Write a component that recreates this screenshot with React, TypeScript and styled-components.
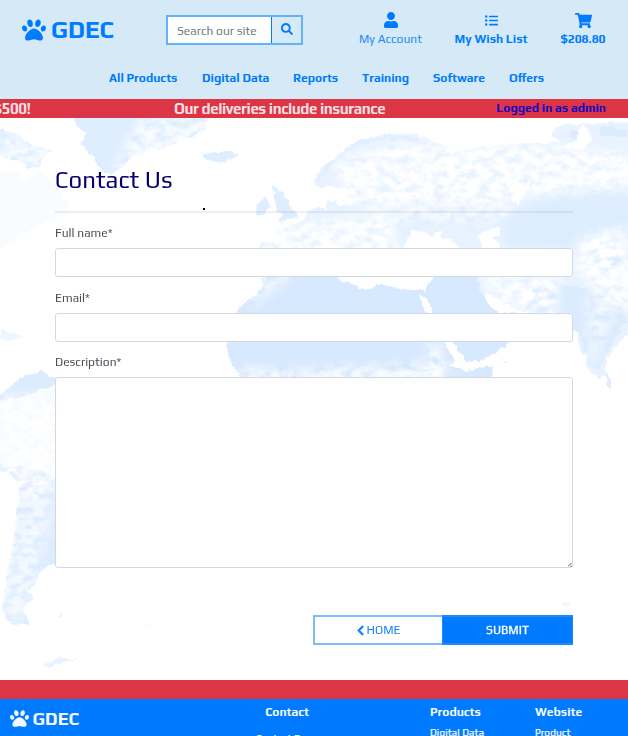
import React from 'react';
import styled, { createGlobalStyle } from 'styled-components';
import { FaPaw, FaUser, FaListUl, FaShoppingCart, FaSearch, FaChevronLeft } from 'react-icons/fa';

const GlobalStyle = createGlobalStyle`
  *, *::before, *::after { box-sizing: border-box; }
  body { margin: 0; background: #fff; overflow: hidden; }
  svg { display: block; flex: none; }
`;

const Page = styled.div`
  width: 628px;
  height: 736px;
  overflow: hidden;
  display: flex;
  flex-direction: column;
  font-family: Play, Roboto, sans-serif;
  font-size: 12px;
  color: #495057;
`;

const Header = styled.header`
  height: 99px;
  flex: none;
  background: #d5eaf6;
  color: #007bff;
`;

const TopBar = styled.div`
  height: 60px;
  display: flex;
  align-items: flex-start;
`;

const Brand = styled.a`
  flex: none;
  display: flex;
  align-items: center;
  gap: 5px;
  width: 166px;
  height: 59px;
  padding-left: 22px;
  font-size: 24px;
  font-weight: 700;
`;

const SearchBox = styled.form`
  flex: none;
  display: flex;
  width: 137px;
  height: 30px;
  margin-top: 15px;
  border: 2px solid #67b0fb;
`;

const SearchInput = styled.input`
  width: 103px;
  border: 0;
  padding: 2px 0 0 9px;
  background: #fff;
  font: inherit;
  border-radius: 0;
  outline: none;
  &::placeholder { color: #747b82; opacity: 1; }
`;

const SearchButton = styled.button`
  flex: 1;
  display: flex;
  justify-content: center;
  align-items: center;
  padding: 0 0 2px 0;
  border: 0;
  border-left: 1px solid #007bff;
  background: transparent;
  color: #007bff;
`;

const Account = styled.nav`
  flex: none;
  display: flex;
  gap: 32px;
  margin-left: 56px;
`;

const AccountLink = styled.a<{ $width: number; $bold?: boolean }>`
  display: flex;
  flex-direction: column;
  align-items: center;
  width: ${(p) => p.$width}px;
  padding-top: 12px;
  line-height: 15px;
  white-space: nowrap;
  font-weight: ${(p) => (p.$bold ? 700 : 400)};
  color: ${(p) => (p.$bold ? '#007bff' : '#2a89f6')};
  svg { color: #007bff; }
`;

const IconSlot = styled.span`
  height: 20px;
  display: flex;
  align-items: flex-start;
`;

const SmallIconSlot = styled(IconSlot)`
  padding-top: 2px;
`;

const Menu = styled.nav`
  display: flex;
  gap: 24px;
  padding: 11px 0 0 109px;
`;

const MenuItem = styled.a<{ $width: number }>`
  width: ${(p) => p.$width}px;
  white-space: nowrap;
  font-weight: 700;
  line-height: 15px;
`;

const Promo = styled.div`
  height: 19px;
  flex: none;
  display: flex;
  align-items: center;
  overflow: hidden;
  white-space: nowrap;
  background: #dc3545;
  color: #fbdfe2;
  font-size: 15px;
  font-weight: 700;
  letter-spacing: -0.42px;
`;

const PromoEnd = styled.span`
  width: 181px;
  margin-left: -7px;
`;

const PromoText = styled.span`
  flex: none;
`;

const LoginState = styled.span`
  margin: 0 22px 0 auto;
  padding-bottom: 2px;
  font-size: 12px;
  letter-spacing: 0;
  color: #1508c4;
`;

const Main = styled.main`
  position: relative;
  z-index: 0;
  height: 562px;
  flex: none;
  padding: 47px 55px 0;
`;

const MapLayer = styled.svg`
  position: absolute;
  inset: 0;
  z-index: -1;
`;

const Title = styled.h1`
  margin: 0;
  height: 46px;
  font-size: 24px;
  line-height: 29px;
  font-weight: 400;
  color: #08006e;
`;

const Rule = styled.div`
  position: relative;
  height: 2px;
  background: rgba(0, 0, 0, 0.06);
`;

const Speck = styled.span`
  position: absolute;
  left: 148px;
  top: -3px;
  width: 1.5px;
  height: 2px;
  background: #000;
`;

const Field = styled.label<{ $gap: number }>`
  display: block;
  padding-top: ${(p) => p.$gap}px;
  line-height: 15px;
`;

const TextInput = styled.input`
  display: block;
  width: 518px;
  height: 29px;
  margin-top: 7px;
  border: 1px solid #d3d9df;
  border-radius: 3px;
  background: #fff;
`;

const AreaWrap = styled.div`
  position: relative;
  width: 518px;
`;

const TextArea = styled.textarea`
  display: block;
  width: 518px;
  height: 191px;
  margin-top: 7px;
  border: 1px solid #d3d9df;
  border-radius: 3px;
  background: #fff;
  resize: none;
`;

const Grip = styled.svg`
  position: absolute;
  right: 1px;
  bottom: 1px;
`;

const Actions = styled.div`
  display: flex;
  justify-content: flex-end;
  margin-top: 47px;
`;

const ActionButton = styled.button<{ $primary?: boolean }>`
  display: flex;
  align-items: center;
  justify-content: center;
  gap: 1px;
  width: ${(p) => (p.$primary ? 131 : 129)}px;
  height: 30px;
  padding: 0 ${(p) => (p.$primary ? 0 : 2)}px 0 0;
  border: 2px solid ${(p) => (p.$primary ? '#1f8afd' : '#7fbbfb')};
  border-right-width: ${(p) => (p.$primary ? 1 : 0)}px;
  border-left-width: ${(p) => (p.$primary ? 1 : 2)}px;
  background: ${(p) => (p.$primary ? '#007bff' : '#fff')};
  color: ${(p) => (p.$primary ? '#fff' : '#1683fb')};
  font: inherit;
  -webkit-text-stroke: ${(p) => (p.$primary ? '0.3px #fff' : '0')};
`;

const RedBand = styled.div`
  height: 19px;
  flex: none;
  background: #dc3545;
`;

const Footer = styled.footer`
  height: 37px;
  flex: none;
  display: grid;
  grid-template-columns: 244px 186px 105px 93px;
  overflow: hidden;
  background: #007bff;
  color: #f4f9ff;
`;

const FooterBrand = styled.div`
  display: flex;
  align-items: center;
  gap: 4px;
  height: 39px;
  padding-left: 9.5px;
  font-size: 17.8px;
  font-weight: 700;
`;

const FooterColumn = styled.div<{ $center?: boolean }>`
  width: ${(p) => (p.$center ? '86px' : 'auto')};
  padding-top: 6px;
  text-align: ${(p) => (p.$center ? 'center' : 'left')};
  white-space: nowrap;
`;

const FooterTitle = styled.div`
  font-weight: 700;
  line-height: 15px;
`;

const FooterLink = styled.div<{ $gap: number }>`
  margin-top: ${(p) => p.$gap}px;
  font-size: 10px;
  line-height: 12px;
  letter-spacing: 0.08px;
  -webkit-text-stroke: 0.25px #f4f9ff;
`;

const menu: [string, number][] = [
  ['All Products', 69],
  ['Digital Data', 67],
  ['Reports', 45],
  ['Training', 47],
  ['Software', 52],
  ['Offers', 36],
];

function WorldMap() {
  return (
    <MapLayer width="628" height="562" viewBox="0 118 628 562" aria-hidden="true">
      <defs>
        <filter id="coast" x="0" y="118" width="628" height="562" filterUnits="userSpaceOnUse">
          <feTurbulence type="fractalNoise" baseFrequency="0.13" numOctaves="3" seed="4" result="n" />
          <feDisplacementMap in="SourceGraphic" in2="n" scale="7" xChannelSelector="R" yChannelSelector="G" result="d" />
          <feGaussianBlur in="d" stdDeviation="0.5" />
        </filter>
        <filter id="steppe" x="0" y="118" width="628" height="562" filterUnits="userSpaceOnUse">
          <feGaussianBlur in="SourceGraphic" stdDeviation="4" />
        </filter>
        <filter id="relief" x="0" y="118" width="628" height="562" filterUnits="userSpaceOnUse">
          <feGaussianBlur in="SourceGraphic" stdDeviation="6" result="b" />
          <feTurbulence type="fractalNoise" baseFrequency="0.09 0.14" numOctaves="5" seed="9" />
          <feColorMatrix values="0 0 0 0 1  0 0 0 0 1  0 0 0 0 1  2.6 0 0 0 -0.6" result="m" />
          <feComposite in="b" in2="m" operator="in" />
        </filter>
      </defs>
      <g filter="url(#coast)">
        <g fill="#deeeff">
          <path d="M70 112 78 128 88 134 81 142 85 150 94 158 97 165 104 172 112 174 122 168 126 162 138 155 150 150 170 146 190 138 206 130 205 122 218 112Z" />
          <path d="M200 152 210 154 215 151 230 151 239 154 232 160 218 163 208 159Z" />
          <path d="M-5 129 14 133 24 140 30 144 52 150 44 156 38 166 28 168 20 160 10 160-5 152Z" />
          <path d="M274 186 284 192 286 200 292 208 298 217 290 221 278 222 282 214 276 208Z" />
          <path d="M256 206 266 196 270 206 264 216 257 214Z" />
          <path d="M503 361 508 361 508 363 503 363Z" opacity=".7" />
          <path d="M606 372 612 380 612 388 606 386Z" />
          <path d="M0 330 12 332 24 338 8 340 0 338Z" opacity=".5" />
          <path d="M44 665 62 658 78 658 58 664 44 668Z M55 616 64 613 62 616Z" opacity=".7" />
          <path d="M562 603 568 602 569 606 562 606Z M145 623 152 625 148 626Z" opacity=".5" />
        </g>
        <path fill="#f9fcff" d="M-5 172 16 172 24 182 38 170 50 180 66 200 70 212 50 220 20 235-5 255Z" />
        <path
          fill="#e8f3ff"
          d="M314 184 318 170 332 160 345 148 360 140 385 134 410 134 430 140 452 148 440 152 470 150 480 148 500 145 524 143 560 143 552 134 558 126 572 124 640 122 640 325 628 335 612 350 606 360 606 374 598 378 590 372 582 352 577 330 570 336 556 313 520 313 500 300 480 293 474 250 430 249 300 262 297 249 258 256 260 243 280 243 276 230 290 224 300 222 312 208 325 208 330 196 336 200 340 208 360 200 345 196 330 192Z"
        />
        <path
          fill="#d7e9fe"
          d="M262 277 266 270 335 270 338 280 352 284 365 291 371 290 375 284 388 286 410 290 424 290 432 278 436 268 476 268 480 290 500 309 513 314 513 340 500 350 480 360 465 362 456 360 450 366 466 370 493 366 492 376 480 395 246 395 240 378 232 364 227 354 229 340 234 318 240 306 250 298 262 286Z"
        />
        <path
          fill="#dbecff"
          d="M600 252 640 248 640 266 610 266 594 260Z M524 292 560 284 590 290 622 308 626 322 610 346 600 370 590 366 580 336 560 314 526 310Z"
        />
        <path fill="#dcecff" d="M-5 402 10 385 25 376 40 370 62 382 40 390 25 396 10 402Z M22 468 40 470 62 480 62 567 54 564 40 570 36 585 28 592 34 598 22 610 28 624 14 625 4 618 3 600 6 580 12 548 16 520 20 490Z M-5 460 10 462 26 470 20 484 8 474-5 470Z" />
        <path fill="#f7fbff" d="M-5 402 20 397 62 385 62 480 40 470 16 468-5 462Z" />
        <g fill="none" stroke="#dcecff" strokeWidth="3">
          <path d="M317 180 328 168 345 152 362 142 385 138 410 138 445 150" opacity=".7" />
          <path d="M600 130 628 134 M570 132 584 140" strokeWidth="8" />
        </g>
      </g>
      <g fill="#ddedff" filter="url(#steppe)">
        <path d="M640 192 600 190 550 194 524 206 500 216 480 206 450 206 400 214 375 218 405 230 440 224 470 228 505 226 505 246 570 250 600 236 640 226Z" />
      </g>
      <g fill="#fff" filter="url(#relief)">
        <path d="M335 160 400 142 560 146 640 155 640 188 520 197 340 202Z" />
        <path d="M275 225 390 215 400 262 260 262Z" />
        <path d="M340 195 520 195 500 225 400 225Z" opacity=".7" />
        <path d="M580 236 628 228 640 310 615 305 575 270Z M480 275 560 275 555 314 500 306Z" />
        <path d="M235 368 300 370 450 362 450 385 240 385Z M430 330 450 370 425 376Z" opacity=".9" />
        <path d="M240 270 300 272 250 310Z" opacity=".6" />
        <path d="M0 395 60 395 60 480 20 500 15 540 0 620Z" opacity=".9" />
        <path d="M30 480 60 480 40 560 28 620 0 620Z" opacity=".7" />
        <path d="M140 118 220 118 200 145 110 175Z M0 130 60 145 40 170 0 165Z" opacity=".8" />
        <path d="M585 290 620 300 590 380Z" opacity=".6" />
      </g>
      <g fill="#fff" filter="url(#coast)">
        <path d="M312 196 326 186 352 190 340 200 322 202 312 202Z" />
        <path d="M400 250 408 238 414 230 424 232 430 237 444 228 440 236 452 242 462 250Z" />
        <path d="M478 236 486 230 500 228 500 233 492 236 498 244 504 250 490 252 482 246Z" />
        <path d="M419 294 426 298 440 325 447 332 460 352 466 362 456 362 446 345 436 328 424 310Z" />
        <path d="M482 293 488 296 494 303 512 310 500 316 490 306Z" />
        <path d="M512 198 516 188 530 180 526 192 518 206Z" />
        <path d="M580 126 590 130 592 140 582 150 560 146 576 142Z" />
      </g>
    </MapLayer>
  );
}

export default function App() {
  return (
    <Page>
      <GlobalStyle />
      <Header>
        <TopBar>
          <Brand>
            <FaPaw size={24} />
            GDEC
          </Brand>
          <SearchBox>
            <SearchInput placeholder="Search our site" />
            <SearchButton type="button" aria-label="Search">
              <FaSearch size={12} />
            </SearchButton>
          </SearchBox>
          <Account>
            <AccountLink $width={63}>
              <IconSlot><FaUser size={16} /></IconSlot>
              My Account
            </AccountLink>
            <AccountLink $width={74} $bold>
              <SmallIconSlot><FaListUl size={13} /></SmallIconSlot>
              My Wish List
            </AccountLink>
            <AccountLink $width={46} $bold>
              <IconSlot><FaShoppingCart size={17} /></IconSlot>
              $208.80
            </AccountLink>
          </Account>
        </TopBar>
        <Menu>
          {menu.map(([label, width]) => (
            <MenuItem key={label} $width={width}>{label}</MenuItem>
          ))}
        </Menu>
      </Header>
      <Promo>
        <PromoEnd>$500!</PromoEnd>
        <PromoText>Our deliveries include insurance</PromoText>
        <LoginState>Logged in as admin</LoginState>
      </Promo>
      <Main>
        <WorldMap />
        <Title>Contact Us</Title>
        <Rule><Speck /></Rule>
        <Field $gap={13}>
          Full name*
          <TextInput />
        </Field>
        <Field $gap={14}>
          Email*
          <TextInput />
        </Field>
        <Field $gap={13}>
          Description*
          <AreaWrap>
            <TextArea />
            <Grip width="4" height="4" viewBox="0 0 4 4" stroke="#555">
              <path d="M0 3.5 3.5 0M2.5 4 4 2.5" />
            </Grip>
          </AreaWrap>
        </Field>
        <Actions>
          <ActionButton>
            <FaChevronLeft size={11} stroke="currentColor" strokeWidth={36} />
            HOME
          </ActionButton>
          <ActionButton $primary>SUBMIT</ActionButton>
        </Actions>
      </Main>
      <RedBand />
      <Footer>
        <FooterBrand>
          <FaPaw size={19} />
          GDEC
        </FooterBrand>
        <FooterColumn $center>
          <FooterTitle>Contact</FooterTitle>
          <FooterLink $gap={13}>Contact Form</FooterLink>
        </FooterColumn>
        <FooterColumn>
          <FooterTitle>Products</FooterTitle>
          <FooterLink $gap={7}>Digital Data</FooterLink>
        </FooterColumn>
        <FooterColumn>
          <FooterTitle>Website</FooterTitle>
          <FooterLink $gap={7}>Product</FooterLink>
        </FooterColumn>
      </Footer>
    </Page>
  );
}
